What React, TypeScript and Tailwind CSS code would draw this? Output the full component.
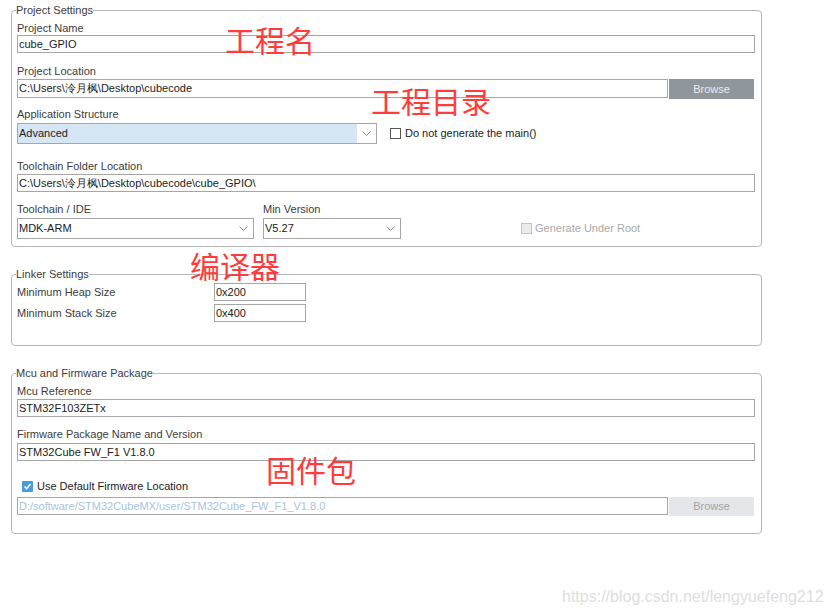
import React from "react";

const Chevron = () => (
  <svg width="9" height="5" viewBox="0 0 9 5" className="text-[#8a8a8a]">
    <path d="M0.5 0.5 L4.5 4.5 L8.5 0.5" fill="none" stroke="currentColor" strokeWidth="1" />
  </svg>
);

const Label = ({ children, className = "" }: { children: React.ReactNode; className?: string }) => (
  <div className={`h-[14px] leading-[14px] text-[#3c3c3c] ${className}`}>{children}</div>
);

const TextBox = ({ value, className = "" }: { value: string; className?: string }) => (
  <div
    className={`h-[18px] border border-[#a6a6a6] bg-white px-[1px] leading-[16px] text-[#222] whitespace-nowrap overflow-hidden ${className}`}
  >
    {value}
  </div>
);

const Select = ({ value, className = "", tinted = false }: { value: string; className?: string; tinted?: boolean }) => (
  <div className={`flex h-[21px] border border-[#a6a6a6] bg-white ${className}`}>
    <div className={`flex-1 px-[1px] leading-[19px] text-[#222] ${tinted ? "bg-[#d7e6f5]" : ""}`}>{value}</div>
    <div className="flex w-[19px] items-center justify-center">
      <Chevron />
    </div>
  </div>
);

const Annotation = ({ text, className }: { text: string; className: string }) => (
  <div
    className={`pointer-events-none absolute text-[30px] leading-none text-[#ff3b3b] font-['Noto_Sans_CJK_SC',sans-serif] ${className}`}
  >
    {text}
  </div>
);

export default function App() {
  return (
    <div className="relative h-[615px] w-[831px] overflow-hidden bg-white font-['Liberation_Sans',Arial,sans-serif] text-[11px]">
      {/* Project Settings */}
      <fieldset className="ml-[11px] mt-[3px] w-[751px] rounded-[4px] border border-[#b7b7b7] pl-[5px] pr-[6px] pt-[4px] pb-[7px]">
        <legend className="-ml-[1px] h-[14px] leading-[14px] text-[#3c3c3c]">Project Settings</legend>
        <Label>Project Name</Label>
        <TextBox value="cube_GPIO" />

        <Label className="mt-[11px]">Project Location</Label>
        <div className="mt-[1px] flex h-[19px] gap-[1px]">
          <TextBox value="C:\Users\泠月枫\Desktop\cubecode" className="w-[651px] h-[19px] leading-[17px]" />
          <div className="flex h-[20px] w-[85px] items-center justify-center bg-[#8f969c] text-[#e9ecee]">Browse</div>
        </div>

        <Label className="mt-[9px]">Application Structure</Label>
        <div className="mt-[2px] flex items-center">
          <Select value="Advanced" tinted className="w-[360px]" />
          <div className="ml-[13px] flex items-center gap-[4px] text-[#222]">
            <div className="h-[11px] w-[11px] border border-[#555] bg-white" />
            <span>Do not generate the main()</span>
          </div>
        </div>

        <Label className="mt-[15px]">Toolchain Folder Location</Label>
        <TextBox value="C:\Users\泠月枫\Desktop\cubecode\cube_GPIO\" className="mt-[1px]" />

        <div className="mt-[10px] flex">
          <Label className="w-[246px]">Toolchain / IDE</Label>
          <Label>Min Version</Label>
        </div>
        <div className="mt-[2px] flex items-center">
          <Select value="MDK-ARM" className="h-[20px] w-[237px]" />
          <Select value="V5.27" className="ml-[9px] h-[20px] w-[138px]" />
          <div className="ml-[120px] flex items-center gap-[3px] text-[#a9a9a9]">
            <div className="h-[11px] w-[11px] border border-[#c4c4c4] bg-[#ececec]" />
            <span>Generate Under Root</span>
          </div>
        </div>
      </fieldset>

      {/* Linker Settings */}
      <fieldset className="ml-[11px] mt-[20px] w-[751px] rounded-[4px] border border-[#b7b7b7] pl-[5px] pr-[6px] pt-[2px] pb-[24px]">
        <legend className="-ml-[1px] h-[14px] leading-[14px] text-[#3c3c3c]">Linker Settings</legend>
        <div className="flex h-[17px] items-center">
          <Label className="w-[197px]">Minimum Heap Size</Label>
          <TextBox value="0x200" className="h-[17px] w-[92px] leading-[15px]" />
        </div>
        <div className="mt-[4px] flex h-[17px] items-center">
          <Label className="w-[197px]">Minimum Stack Size</Label>
          <TextBox value="0x400" className="h-[17px] w-[92px] leading-[15px]" />
        </div>
      </fieldset>

      {/* Mcu and Firmware Package */}
      <fieldset className="ml-[11px] mt-[20px] w-[751px] rounded-[4px] border border-[#b7b7b7] pl-[5px] pr-[6px] pt-[4px] pb-[17px]">
        <legend className="-ml-[1px] h-[14px] leading-[14px] text-[#3c3c3c]">Mcu and Firmware Package</legend>
        <Label>Mcu Reference</Label>
        <TextBox value="STM32F103ZETx" className="mt-[1px]" />

        <Label className="mt-[10px]">Firmware Package Name and Version</Label>
        <TextBox value="STM32Cube FW_F1 V1.8.0" className="mt-[2px]" />

        <div className="mt-[18px] flex h-[14px] items-center gap-[4px] pl-[5px] text-[#222]">
          <div className="flex h-[11px] w-[11px] items-center justify-center rounded-[1px] bg-[#4a9ae0]">
            <svg width="9" height="9" viewBox="0 0 9 9">
              <path d="M1.5 4.5 L3.6 6.6 L7.6 2" fill="none" stroke="white" strokeWidth="1.6" />
            </svg>
          </div>
          <span>Use Default Firmware Location</span>
        </div>
        <div className="mt-[4px] flex h-[19px] gap-[1px]">
          <TextBox value="D:/software/STM32CubeMX/user/STM32Cube_FW_F1_V1.8.0" className="w-[651px] text-[#a9c3e0]" />
          <div className="flex h-[19px] w-[85px] items-center justify-center bg-[#e4e7ea] text-[#a3a3a3]">Browse</div>
        </div>
      </fieldset>

      {/* Annotations */}
      <Annotation text="工程名" className="left-[225px] top-[24px]" />
      <Annotation text="工程目录" className="left-[371px] top-[85px]" />
      <Annotation text="编译器" className="left-[190px] top-[250px]" />
      <Annotation text="固件包" className="left-[266px] top-[454px]" />

      <div className="absolute left-[562px] top-[587px] text-[16px] leading-[20px] text-[#dedede]">
        https://blog.csdn.net/lengyuefeng212
      </div>
    </div>
  );
}
